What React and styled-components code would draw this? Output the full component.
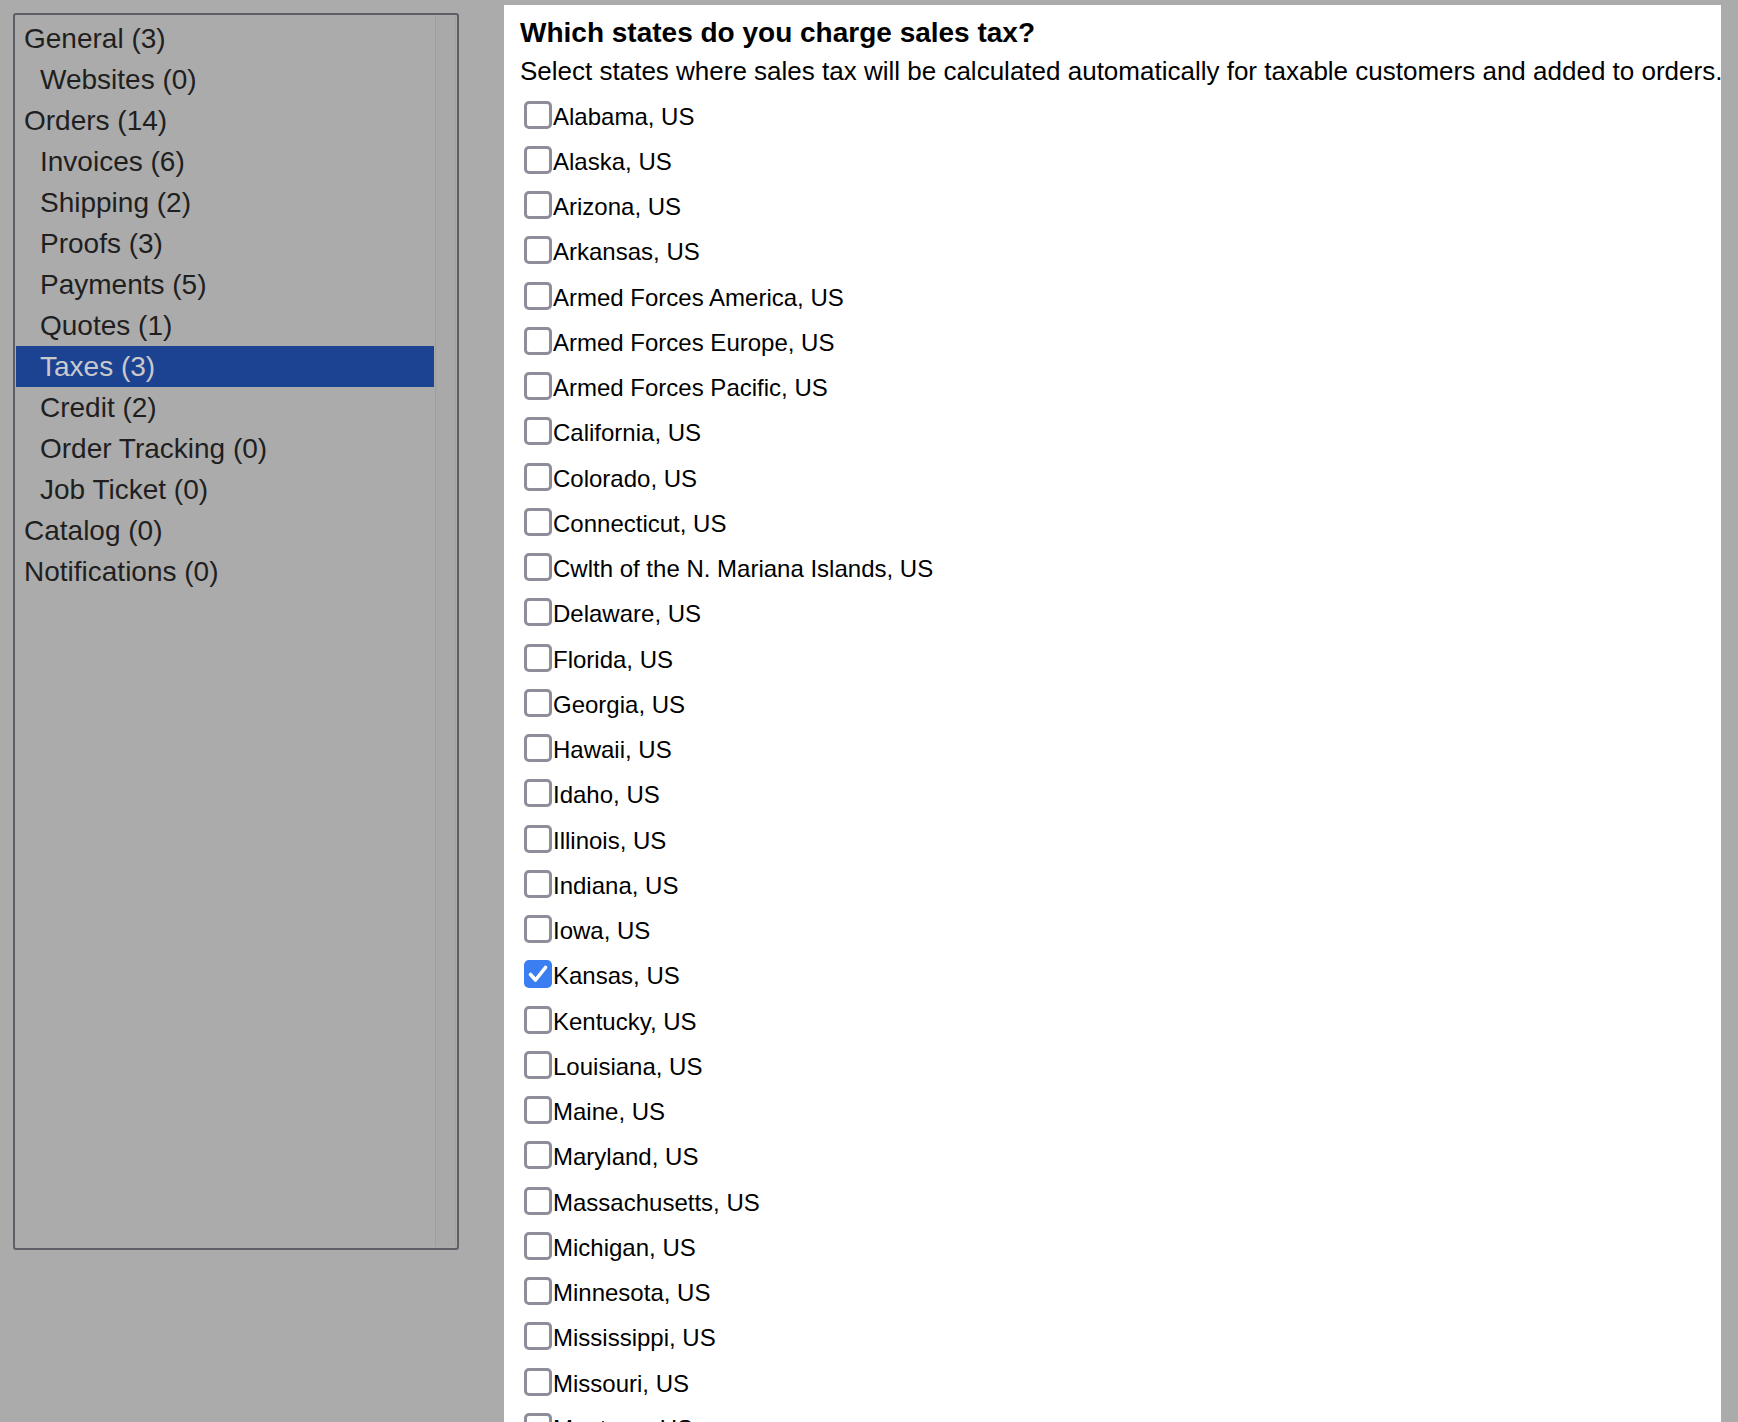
import React from "react";
import styled, { createGlobalStyle } from "styled-components";

const GlobalStyle = createGlobalStyle`
	html, body {
		margin: 0;
		padding: 0;
		background: #ababab;
		font-family: "Liberation Sans", Arial, sans-serif;
	}
`;

const Root = styled.div`
	display: flex;
	align-items: flex-start;
	height: 100vh;
	overflow: hidden;
`;

// sidebar
const Sidebar = styled.div`
	display: flex;
	box-sizing: border-box;
	width: 446px;
	height: 1237px;
	margin: 13px 0 0 13px;
	border: 2px solid #5f5e66;
	border-radius: 3px;
	padding-right: 1px;
`;

const List = styled.ul`
	flex: 1;
	list-style: none;
	margin: 0;
	padding: 3px 1px 0;
`;

const Item = styled.li`
	height: 41px;
	line-height: 41px;
	padding-left: ${(p) => (p.$sub ? "24px" : "8px")};
	font-size: 28px;
	white-space: nowrap;
	color: ${(p) => (p.$active ? "#c9c9cc" : "#1f1f1f")};
	background: ${(p) => (p.$active ? "#1c4391" : "transparent")};
`;

const Track = styled.div`
	width: 19px;
	margin: 1px 0 1px;
	border-left: 1px solid #9e9e9e;
	border-right: 1px solid #a2a2a2;
	background: #a9a9a9;
`;

// content
const Panel = styled.div`
	box-sizing: border-box;
	width: 1217px;
	min-height: 1417px;
	margin: 5px 0 0 45px;
	padding: 12px 0 0 16px;
	background: #ffffff;
	overflow: hidden;
	color: #000000;
`;

const Title = styled.h1`
	margin: 0;
	font-size: 28px;
	font-weight: bold;
	line-height: 32px;
`;

const Subtitle = styled.p`
	margin: 6.4px 0 0;
	font-size: 26px;
	line-height: 32px;
	white-space: nowrap;
`;

const States = styled.div`
	display: flex;
	flex-direction: column;
	margin-top: 13.3px;
	padding-left: 4px;
`;

const Row = styled.label`
	display: flex;
	align-items: flex-start;
	height: 45.25px;
	font-size: 24px;
	line-height: 32px;
	white-space: nowrap;
`;

const Box = styled.span`
	box-sizing: border-box;
	width: 28px;
	height: 28px;
	margin-right: 1px;
	flex-shrink: 0;
	border-radius: 5px;
	border: ${(p) => (p.$checked ? "none" : "3px solid #8f8d99")};
	background: ${(p) => (p.$checked ? "#3b7ef1" : "#ffffff")};
	display: flex;
	align-items: center;
	justify-content: center;
`;

const nav = [
	{ label: "General (3)" },
	{ label: "Websites (0)", sub: true },
	{ label: "Orders (14)" },
	{ label: "Invoices (6)", sub: true },
	{ label: "Shipping (2)", sub: true },
	{ label: "Proofs (3)", sub: true },
	{ label: "Payments (5)", sub: true },
	{ label: "Quotes (1)", sub: true },
	{ label: "Taxes (3)", sub: true, active: true },
	{ label: "Credit (2)", sub: true },
	{ label: "Order Tracking (0)", sub: true },
	{ label: "Job Ticket (0)", sub: true },
	{ label: "Catalog (0)" },
	{ label: "Notifications (0)" },
];

const states = [
	"Alabama",
	"Alaska",
	"Arizona",
	"Arkansas",
	"Armed Forces America",
	"Armed Forces Europe",
	"Armed Forces Pacific",
	"California",
	"Colorado",
	"Connecticut",
	"Cwlth of the N. Mariana Islands",
	"Delaware",
	"Florida",
	"Georgia",
	"Hawaii",
	"Idaho",
	"Illinois",
	"Indiana",
	"Iowa",
	"Kansas",
	"Kentucky",
	"Louisiana",
	"Maine",
	"Maryland",
	"Massachusetts",
	"Michigan",
	"Minnesota",
	"Mississippi",
	"Missouri",
	"Montana",
	"Nebraska",
	"Nevada",
];

function Checkbox({ checked }) {
	return (
		<Box $checked={checked}>
			{checked && (
				<svg width="28" height="28" viewBox="0 0 28 28">
					<path d="M6.5 14.5 L11.5 20 L21.5 7.5" fill="none" stroke="#ffffff" strokeWidth="3.6" strokeLinecap="round" strokeLinejoin="round" />
				</svg>
			)}
		</Box>
	);
}

export default function App() {
	return (
		<Root>
			<GlobalStyle />
			<Sidebar>
				<List>
					{nav.map((n) => (
						<Item key={n.label} $sub={n.sub} $active={n.active}>
							{n.label}
						</Item>
					))}
				</List>
				<Track />
			</Sidebar>

			<Panel>
				<Title>Which states do you charge sales tax?</Title>
				<Subtitle>Select states where sales tax will be calculated automatically for taxable customers and added to orders.</Subtitle>
				<States>
					{states.map((s) => (
						<Row key={s}>
							<Checkbox checked={s === "Kansas"} />
							{s}, US
						</Row>
					))}
				</States>
			</Panel>
		</Root>
	);
}
